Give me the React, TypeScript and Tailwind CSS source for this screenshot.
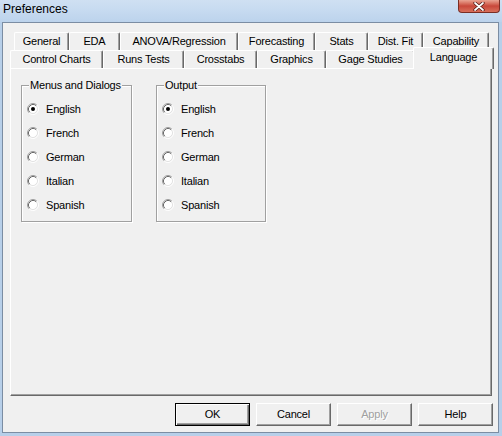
import React from 'react';

const backRow = [
  { label: 'General', w: 'w-[55px]' },
  { label: 'EDA', w: 'w-[51px]' },
  { label: 'ANOVA/Regression', w: 'w-[118px]' },
  { label: 'Forecasting', w: 'w-[77px]' },
  { label: 'Stats', w: 'w-[53px]' },
  { label: 'Dist. Fit', w: 'w-[55px]' },
  { label: 'Capability', w: 'w-[66px]' },
];

const frontRow = [
  { label: 'Control Charts', w: 'w-[93px]' },
  { label: 'Runs Tests', w: 'w-[81px]' },
  { label: 'Crosstabs', w: 'w-[73px]' },
  { label: 'Graphics', w: 'w-[69px]' },
  { label: 'Gage Studies', w: 'w-[89px]' },
];

const languages = ['English', 'French', 'German', 'Italian', 'Spanish'];

const Radio = ({ checked }: { checked?: boolean }) => (
  <svg width="12" height="12" viewBox="0 0 12 12" className="shrink-0">
    <circle cx="6" cy="6" r="4.5" fill="#fff" />
    <path d="M2.11 9.89 A5.5 5.5 0 0 1 9.89 2.11" fill="none" stroke="#a0a0a0" strokeWidth="1" />
    <path d="M2.82 9.18 A4.5 4.5 0 0 1 9.18 2.82" fill="none" stroke="#696969" strokeWidth="1" />
    <path d="M9.89 2.11 A5.5 5.5 0 0 1 2.11 9.89" fill="none" stroke="#ffffff" strokeWidth="1" />
    <path d="M9.18 2.82 A4.5 4.5 0 0 1 2.82 9.18" fill="none" stroke="#e3e3e3" strokeWidth="1" />
    {checked && <circle cx="6" cy="6" r="2" fill="#000" />}
  </svg>
);

const Tab = ({ label, w }: { label: string; w: string }) => (
  <div
    className={`${w} h-[18px] flex items-center justify-center border-t border-l border-white border-r border-r-[#696969] rounded-t-[2px] shadow-[inset_-1px_0_0_#a0a0a0] whitespace-nowrap`}
  >
    {label}
  </div>
);

const GroupBox = ({ title, w }: { title: string; w: string }) => (
  <div className={`relative ${w} h-[137px] border border-[#a0a0a0] shadow-[inset_1px_1px_0_#fff,1px_1px_0_#fff] pt-[11px]`}>
    <span className="absolute -top-[8px] left-[7px] px-[1px] bg-[#f0f0f0] leading-[14px]">{title}</span>
    {languages.map((l, i) => (
      <div key={l} className="h-[24px] flex items-center pl-[5px] gap-[7px]">
        <Radio checked={i === 0} />
        <span>{l}</span>
      </div>
    ))}
  </div>
);

const Button = ({ label, def, disabled }: { label: string; def?: boolean; disabled?: boolean }) => (
  <div
    className={
      def
        ? 'w-[75px] h-[23px] flex items-center justify-center border border-black shadow-[inset_1px_1px_0_#fff,inset_-1px_-1px_0_#696969,inset_-2px_-2px_0_#a0a0a0]'
        : 'w-[75px] h-[23px] flex items-center justify-center border border-t-white border-l-white border-r-[#696969] border-b-[#696969] shadow-[inset_-1px_-1px_0_#a0a0a0]'
    }
  >
    <span className={disabled ? 'text-[#a0a0a0] [text-shadow:1px_1px_0_#fff]' : ''}>{label}</span>
  </div>
);

export default function App() {
  return (
    <div className="relative w-[502px] h-[436px] overflow-hidden bg-[#b7cfe9] flex flex-col [font-family:'Liberation_Sans',Arial,sans-serif] text-black">
      <div className="h-[22px] shrink-0 bg-linear-to-b from-[#cfe0f2] via-[#c6daf0] to-[#bcd3ec] pl-[3px] pt-[1px] text-[12px] leading-[16px]">
        Preferences
      </div>
      <div className="absolute top-0 right-[2px] w-[42px] h-[13px] rounded-b-[4px] border border-t-0 border-[#7a2e24] bg-linear-to-b from-[#e9a493] via-[#c8473a] to-[#d86f5b] flex items-center justify-center">
        <svg width="12" height="9" viewBox="0 0 12 9">
          <path d="M2 1 L10 8 M10 1 L2 8" stroke="#4a1410" strokeWidth="3.2" strokeLinecap="round" />
          <path d="M2 1 L10 8 M10 1 L2 8" stroke="#fff" strokeWidth="1.8" strokeLinecap="round" />
        </svg>
      </div>

      <div className="ml-[2px] w-[497px] h-[411px] border border-[#7b8da3] bg-[#f0f0f0] pl-[7px] pt-[9px] text-[11px] tracking-[-0.2px]">
        <div className="w-[482px]">
          <div className="flex pl-[4px]">
            {backRow.map((t) => (
              <Tab key={t.label} {...t} />
            ))}
          </div>
          <div className="flex h-[18px] items-start">
            {frontRow.map((t) => (
              <Tab key={t.label} {...t} />
            ))}
            <div className="relative z-10 w-[81px] -ml-[2px] -mr-[2px] -mt-[3px] h-[22px] pb-[3px] flex items-center justify-center bg-[#f0f0f0] border-t border-l border-white border-r border-r-[#696969] rounded-t-[2px] shadow-[inset_-1px_0_0_#a0a0a0]">
              Language
            </div>
          </div>
          <div className="h-[328px] border-t border-l border-white border-r border-b border-r-[#696969] border-b-[#696969] shadow-[inset_-1px_-1px_0_#a0a0a0] pl-[10px] pt-[16px] flex items-start gap-[24px]">
            <GroupBox title="Menus and Dialogs" w="w-[111px]" />
            <GroupBox title="Output" w="w-[110px]" />
          </div>
        </div>
        <div className="mt-[7px] ml-[165px] flex gap-[6px]">
          <Button label="OK" def />
          <Button label="Cancel" />
          <Button label="Apply" disabled />
          <Button label="Help" />
        </div>
      </div>
    </div>
  );
}
